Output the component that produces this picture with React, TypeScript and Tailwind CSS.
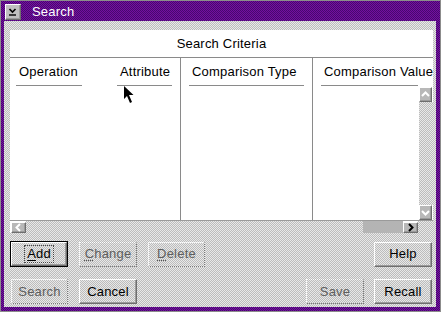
import React from 'react';

const DITHER = 'bg-[conic-gradient(#e8e8e8_0deg_90deg,#bcbcbc_90deg_180deg,#e8e8e8_180deg_270deg,#bcbcbc_270deg_360deg)] bg-size-[2px_2px]';
const PURPLE = 'bg-[conic-gradient(#74109f_0deg_90deg,#480870_90deg_180deg,#74109f_180deg_270deg,#480870_270deg_360deg)] bg-size-[2px_2px]';
const RAISED = 'border border-t-white border-l-white border-r-[#6e6e6e] border-b-[#6e6e6e] shadow-[inset_-1px_-1px_0_#9a9a9a]';

type Dir = 'up' | 'down' | 'left' | 'right';

function Chevron({ dir, color }: { dir: Dir; color: string }) {
  const pts = {
    up: '1,6 4.5,2.5 8,6',
    down: '1,3 4.5,6.5 8,3',
    left: '6,1 2.5,4.5 6,8',
    right: '3,1 6.5,4.5 3,8',
  }[dir];
  return (
    <svg width="9" height="9" viewBox="0 0 9 9">
      <polyline points={pts} fill="none" stroke={color} strokeWidth="2" />
    </svg>
  );
}

function ScrollBtn({ dir, on, className }: { dir: Dir; on?: boolean; className: string }) {
  return (
    <div className={`flex flex-none items-center justify-center bg-[#b8b8b8] ${RAISED} ${className}`}>
      <Chevron dir={dir} color={on ? '#000' : '#fff'} />
    </div>
  );
}

function Heading({ text, className }: { text: string; className: string }) {
  return (
    <div className={`flex-none pt-[6px] ${className}`}>
      <div className="whitespace-nowrap pl-[3px] leading-[15px]">{text}</div>
      <div className="mt-[6px] h-px bg-[#8a8a8a]" />
    </div>
  );
}

function Btn({
  label,
  mn,
  disabled,
  isDefault,
  className,
}: {
  label: string;
  mn?: number;
  disabled?: boolean;
  isDefault?: boolean;
  className: string;
}) {
  const text =
    mn === undefined ? (
      label
    ) : (
      <>
        {label.slice(0, mn)}
        <span className={`underline underline-offset-2 ${disabled ? 'decoration-dotted decoration-[#555]' : ''}`}>
          {label[mn]}
        </span>
        {label.slice(mn + 1)}
      </>
    );

  if (disabled) {
    return (
      <div
        className={`flex h-[25px] flex-none items-center justify-center border border-dotted border-t-white border-l-white border-r-[#777] border-b-[#777] ${DITHER} ${className}`}
      >
        <span className="text-[#5e5e5e]">{text}</span>
      </div>
    );
  }

  if (isDefault) {
    return (
      <div className={`flex h-[26px] flex-none border border-black ${className}`}>
        <div className={`flex flex-1 items-center justify-center ${RAISED} ${DITHER}`}>
          <span className="border border-dotted border-[#444] px-[2px] leading-[16px]">{text}</span>
        </div>
      </div>
    );
  }

  return (
    <div className={`flex h-[25px] flex-none items-center justify-center ${RAISED} ${DITHER} ${className}`}>
      {text}
    </div>
  );
}

export default function App() {
  return (
    <div className="relative flex h-[312px] w-[441px] flex-col border border-[#8c8c8c] font-['Liberation_Sans',Arial,sans-serif] text-[13px] tracking-[0.2px] text-black">
      {/* title bar */}
      <div className={`flex h-[20px] flex-none items-start ${PURPLE}`}>
        <div className={`ml-[4px] mt-[3px] flex h-[16px] w-[16px] items-center justify-center bg-[#c0c0c0] ${RAISED}`}>
          <svg width="12" height="12" viewBox="0 0 12 12">
            <polyline points="2.5,3 5.5,6 8.5,3" fill="none" stroke="#000" strokeWidth="1.6" />
            <line x1="2" y1="9" x2="9" y2="9" stroke="#000" strokeWidth="1.4" />
          </svg>
        </div>
        <span className="ml-[11px] mt-[3px] leading-[16px] text-white">Search</span>
      </div>

      {/* frame + client */}
      <div className={`flex flex-1 flex-col pb-[4px] pl-[3px] pr-[4px] ${PURPLE}`}>
        <div className={`flex flex-1 flex-col ${DITHER}`}>
          {/* table panel */}
          <div className="ml-[6px] mr-[3px] mt-[9px] flex h-[203px] flex-col bg-white">
            <div className="flex h-[27px] flex-none items-center justify-center">Search Criteria</div>
            <div className="h-px flex-none bg-[#8a8a8a]" />

            <div className="flex h-[162px] flex-none">
              <div className="flex w-[170px] flex-none">
                <Heading text="Operation" className="ml-[6px] w-[66px]" />
                <Heading text="Attribute" className="ml-[35px] w-[55px]" />
              </div>
              <div className="w-px flex-none bg-[#8a8a8a]" />
              <div className="flex w-[131px] flex-none">
                <Heading text="Comparison Type" className="ml-[8px] w-[115px]" />
              </div>
              <div className="w-px flex-none bg-[#8a8a8a]" />
              <div className="flex min-w-0 flex-1 flex-col overflow-hidden">
                <Heading text="Comparison Value" className="ml-[8px] w-[97px]" />
                <div className="mt-px flex flex-1 justify-end">
                  <div className="flex w-[14px] flex-col">
                    <ScrollBtn dir="up" className="h-[15px] w-[13px]" />
                    <div className={`flex-1 ${DITHER}`} />
                    <ScrollBtn dir="down" className="h-[15px] w-[13px]" />
                  </div>
                </div>
              </div>
            </div>

            {/* horizontal scrollbar */}
            <div className="flex h-[13px] flex-none items-center border-t border-[#9a9a9a] pl-px">
              <ScrollBtn dir="left" className="h-[11px] w-[15px]" />
              <div className={`h-full w-[337px] ${DITHER}`} />
              <div className="h-full w-[40px] bg-[#b4b4b4]" />
              <ScrollBtn dir="right" on className="h-[11px] w-[15px]" />
              <div className={`h-full flex-1 ${DITHER}`} />
            </div>
          </div>

          {/* buttons */}
          <div className="mt-[8px] flex h-[26px] items-center pl-[6px] pr-[4px]">
            <Btn label="Add" mn={0} isDefault className="w-[58px]" />
            <Btn label="Change" mn={0} disabled className="ml-[11px] w-[58px]" />
            <Btn label="Delete" mn={0} disabled className="ml-[11px] w-[57px]" />
            <Btn label="Help" className="ml-auto w-[58px]" />
          </div>
          <div className="mt-[12px] flex h-[25px] items-center pl-[7px] pr-[4px]">
            <Btn label="Search" disabled className="w-[57px]" />
            <Btn label="Cancel" className="ml-[11px] w-[58px]" />
            <Btn label="Save" disabled className="ml-auto w-[58px]" />
            <Btn label="Recall" className="ml-[10px] w-[58px]" />
          </div>
        </div>
      </div>

      {/* mouse pointer */}
      <svg className="absolute left-[123px] top-[85px]" width="11" height="18" viewBox="0 0 11 18">
        <polygon points="0,0 0,13 3,10 6,17 8,16 5,9 9.5,9" fill="#000" />
      </svg>
    </div>
  );
}
